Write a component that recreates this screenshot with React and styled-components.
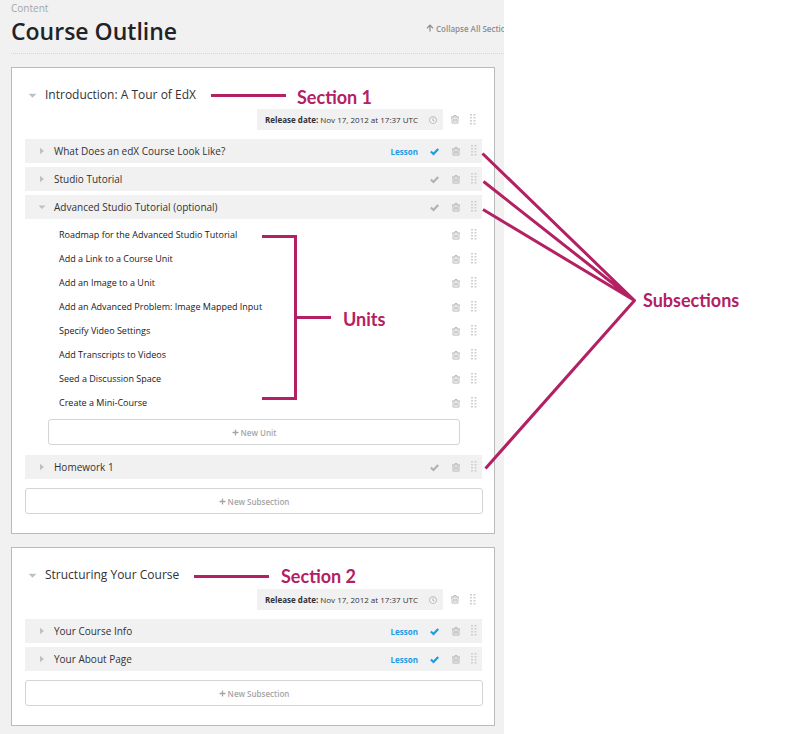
import React from "react";
import styled, { createGlobalStyle } from "styled-components";
import { FaArrowUp, FaPlus, FaRegClock } from "react-icons/fa";

const GlobalStyle = createGlobalStyle`
  * { box-sizing: border-box; }
  body { margin: 0; background: #fff; font-family: "Open Sans", sans-serif; color: #313236; }
  h1, h2, h3, p, ul { margin: 0; padding: 0; }
  button { font-family: inherit; padding: 0; border: 0; background: none; cursor: pointer; }
`;

const Figure = styled.main`
  position: relative;
  min-height: 100vh;
`;

const Studio = styled.div`
  width: 100%;
  max-width: 504px;
  min-height: 100vh;
  padding: 0 9px 7px 11px;
  background: #f1f1f1;
`;

const Header = styled.header`
  display: flex;
  height: 54px;
  margin: 0 -9px 13px 0;
  border-bottom: 1px dotted #d4d6d9;
`;

const Heading = styled.div`
  flex: 1;
  min-width: 0;
`;

const Crumb = styled.p`
  padding-top: 1px;
  font-size: 10px;
  line-height: 14px;
  color: #a4a5a8;
`;

const PageTitle = styled.h1`
  font-size: 23px;
  line-height: 32px;
  font-weight: 600;
  color: #222328;
`;

const CollapseButton = styled.button`
  flex: 0 0 78px;
  display: flex;
  align-items: center;
  gap: 2px;
  height: 16px;
  margin-top: 20px;
  overflow: hidden;
  white-space: nowrap;
  font-size: 8px;
  font-weight: 600;
  color: #8c8d90;
  svg { flex: none; }
`;

const SectionPanel = styled.section`
  margin-bottom: 13px;
  padding: 13px 11px 19px 13px;
  border: 1px solid #b9babc;
  background: #fff;
`;

const SectionHead = styled.div`
  display: flex;
  align-items: center;
  height: 28px;
`;

const Twisty = styled.button`
  flex: none;
  display: flex;
  justify-content: center;
  width: ${(p) => (p.$section ? 14 : 10)}px;
  margin-left: ${(p) => (p.$section ? 0 : 12)}px;
  margin-right: ${(p) => (p.$section ? 6 : 7)}px;
  color: #bfc0c2;
`;

const SectionTitle = styled.h2`
  font-size: 12px;
  line-height: 20px;
  font-weight: 400;
`;

const ReleaseRow = styled.div`
  display: flex;
  justify-content: flex-end;
  align-items: center;
  height: 21px;
  margin: 0 2px 9px 0;
`;

const ReleaseBox = styled.div`
  display: flex;
  align-items: center;
  gap: 4px;
  height: 21px;
  margin-right: 1px;
  padding-left: 8px;
  background: #f1f1f1;
  font-size: 8px;
`;

const IconCell = styled.span`
  flex: none;
  display: flex;
  align-items: center;
  justify-content: center;
  width: ${(p) => (p.$narrow ? 16 : 21)}px;
  height: 20px;
  color: ${(p) => (p.$live ? "#1d9be6" : "#b0b1b4")};
`;

const IconButton = styled(IconCell).attrs({ as: "button", type: "button" })``;

const SubsectionRow = styled.div`
  display: flex;
  align-items: center;
  height: 24px;
  margin: 0 1px 4px 0;
  background: #f1f1f1;
`;

const SubsectionTitle = styled.h3`
  flex: 1;
  font-size: 10px;
  line-height: 16px;
  font-weight: 400;
`;

const Tag = styled.span`
  margin-right: 6px;
  font-size: 8px;
  font-weight: 700;
  color: #1d9be6;
`;

const UnitBlock = styled.div`
  margin-bottom: 10px;
`;

const UnitList = styled.ul`
  list-style: none;
`;

const UnitRow = styled.li`
  display: flex;
  align-items: center;
  height: 24px;
  margin-right: 1px;
  padding-left: 34px;
`;

const UnitLink = styled.a`
  flex: 1;
  font-size: 9px;
  line-height: 16px;
  color: #17171c;
  text-decoration: none;
`;

const AddButton = styled.button`
  display: flex;
  align-items: center;
  justify-content: center;
  gap: 2px;
  width: ${(p) => (p.$inset ? "calc(100% - 46px)" : "100%")};
  height: 26px;
  margin: ${(p) => (p.$inset ? "4px 23px 0" : "9px 0 0")};
  border: 1px solid #d3d4d6;
  border-radius: 3px;
  background: #fff;
  font-size: 8px;
  font-weight: 600;
  color: #a4a5a8;
`;

const Callouts = styled.div`
  position: absolute;
  top: 0;
  left: 0;
  width: 797px;
  max-width: 100%;
  height: 734px;
  overflow: hidden;
  pointer-events: none;
`;

const CalloutLabel = styled.span`
  position: absolute;
  left: ${(p) => p.$x}px;
  top: ${(p) => p.$y}px;
  font-family: Lato, sans-serif;
  font-size: 18px;
  line-height: 24px;
  font-weight: 700;
  white-space: nowrap;
  color: #b32063;
`;

const Caret = ({ open, size }) => (
  <svg width={size} height={size} viewBox="0 0 8 8" fill="currentColor" aria-hidden="true">
    <path d={open ? "M.5 2.5h7L4 6z" : "M2 .7v6.6L6 4z"} />
  </svg>
);

const Check = () => (
  <svg width="9" height="9" viewBox="0 0 9 9" fill="none" stroke="currentColor" strokeWidth="2.2" aria-hidden="true">
    <path d="M.9 4.5L3.500 7L8.200 2" />
  </svg>
);

const Trash = () => (
  <svg width="8" height="9" viewBox="0 0 16 18" fill="none" stroke="currentColor" strokeWidth="1.7" aria-hidden="true">
    <path d="M0 4h16M5 4l1-3h4l1 3M2 4v12.2h12V4M5.500 7v6.500M8 7v6.500M10.500 7v6.500" />
  </svg>
);

const Grip = () => (
  <svg width="6" height="12" viewBox="0 0 6 12" fill="#cbd0d5" aria-hidden="true">
    {[0, 3, 6, 9].map((y) => (
      <path key={y} d={`M0 ${y}h2v1.600H0zM3.500 ${y}h2v1.600h-2z`} />
    ))}
  </svg>
);

const Tools = ({ name }) => (
  <>
    <IconButton aria-label={`Delete ${name}`}><Trash /></IconButton>
    <IconButton $narrow aria-label={`Move ${name}`}><Grip /></IconButton>
  </>
);

const SECTIONS = [
  {
    title: "Introduction: A Tour of EdX",
    subsections: [
      { title: "What Does an edX Course Look Like?", tag: "Lesson" },
      { title: "Studio Tutorial" },
      {
        title: "Advanced Studio Tutorial (optional)",
        units: [
          "Roadmap for the Advanced Studio Tutorial",
          "Add a Link to a Course Unit",
          "Add an Image to a Unit",
          "Add an Advanced Problem: Image Mapped Input",
          "Specify Video Settings",
          "Add Transcripts to Videos",
          "Seed a Discussion Space",
          "Create a Mini-Course",
        ],
      },
      { title: "Homework 1" },
    ],
  },
  {
    title: "Structuring Your Course",
    subsections: [
      { title: "Your Course Info", tag: "Lesson" },
      { title: "Your About Page", tag: "Lesson" },
    ],
  },
];

const Subsection = ({ title, tag, units }) => (
  <>
    <SubsectionRow>
      <Twisty type="button" aria-expanded={!!units} aria-label={`Toggle ${title}`}>
        <Caret open={!!units} size={8} />
      </Twisty>
      <SubsectionTitle>{title}</SubsectionTitle>
      {tag && <Tag>{tag}</Tag>}
      <IconCell $live={!!tag}><Check /></IconCell>
      <Tools name={title} />
    </SubsectionRow>
    {units && (
      <UnitBlock>
        <UnitList>
          {units.map((unit) => (
            <UnitRow key={unit}>
              <UnitLink href="#">{unit}</UnitLink>
              <Tools name={unit} />
            </UnitRow>
          ))}
        </UnitList>
        <AddButton type="button" $inset><FaPlus size={7} />New Unit</AddButton>
      </UnitBlock>
    )}
  </>
);

const Section = ({ title, subsections }) => (
  <SectionPanel>
    <SectionHead>
      <Twisty type="button" $section aria-expanded="true" aria-label={`Toggle ${title}`}>
        <Caret open size={9} />
      </Twisty>
      <SectionTitle>{title}</SectionTitle>
    </SectionHead>
    <ReleaseRow>
      <ReleaseBox>
        <span><strong>Release date:</strong> Nov 17, 2012 at 17:37 UTC</span>
        <IconButton aria-label="Edit release date"><FaRegClock size={8} /></IconButton>
      </ReleaseBox>
      <Tools name={title} />
    </ReleaseRow>
    {subsections.map((s) => <Subsection key={s.title} {...s} />)}
    <AddButton type="button"><FaPlus size={7} />New Subsection</AddButton>
  </SectionPanel>
);

const CalloutLines = () => (
  <svg width="797" height="734" viewBox="0 0 797 734" fill="none" stroke="#b32063" strokeWidth="3" aria-hidden="true">
    <path d="M211 95.5h75M194 576.5h75M262 236.5h33.5v162H262M295.5 317.5H331" />
    <path d="M482.5 153.5L634.5 300.5L483.5 181.5M634.5 300.5L483 209.5M634.5 300.5L485.5 468.5" strokeLinejoin="round" />
  </svg>
);

export default function App() {
  return (
    <>
      <GlobalStyle />
      <Figure>
        <Studio>
          <Header>
            <Heading>
              <Crumb>Content</Crumb>
              <PageTitle>Course Outline</PageTitle>
            </Heading>
            <CollapseButton type="button"><FaArrowUp size={8} />Collapse All Sections</CollapseButton>
          </Header>
          {SECTIONS.map((s) => <Section key={s.title} {...s} />)}
        </Studio>
        <Callouts>
          <CalloutLines />
          <CalloutLabel $x={297} $y={85}>Section 1</CalloutLabel>
          <CalloutLabel $x={281} $y={564}>Section 2</CalloutLabel>
          <CalloutLabel $x={343} $y={307}>Units</CalloutLabel>
          <CalloutLabel $x={643} $y={288}>Subsections</CalloutLabel>
        </Callouts>
      </Figure>
    </>
  );
}
